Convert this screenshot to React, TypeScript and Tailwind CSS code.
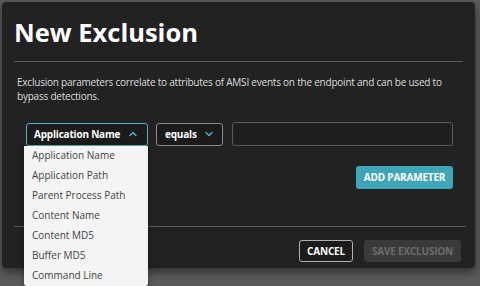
import { ChevronUp, ChevronDown } from 'lucide-react'

const options = [
  'Application Name',
  'Application Path',
  'Parent Process Path',
  'Content Name',
  'Content MD5',
  'Buffer MD5',
  'Command Line',
]

export default function App() {
  return (
    <div
      className="w-[480px] h-[286px] bg-[#5b5b5b] overflow-hidden pt-[2px] pl-[2px]"
      style={{ fontFamily: '"Open Sans", "Liberation Sans", sans-serif' }}
    >
      <div className="relative w-[473px] h-[266px] bg-[#222222] rounded-[4px] shadow-[0_4px_10px_rgba(0,0,0,0.5)] px-3">
        {/* Header */}
        <div className="pt-[14px] pb-[13px] border-b border-[#5a5a5a]">
          <h1 className="text-[25.5px] leading-[32px] font-bold text-white">New Exclusion</h1>
        </div>

        {/* Body */}
        <div className="px-[3px] pt-[13px]">
          <p className="text-[10px] leading-[14px] tracking-[-0.22px] text-[#dddddd]">
            Exclusion parameters correlate to attributes of AMSI events on the endpoint and can be used to
            bypass detections.
          </p>

          <div className="flex items-center gap-2 mt-[19px] pl-[9px]">
            <div className="relative">
              <button className="w-[122px] h-[23px] flex items-center justify-between pl-[7px] pr-[8px] bg-[#1b1b1b] border border-[#55b3c0] rounded-[3px] text-white text-[10px] tracking-[-0.2px] font-bold">
                <span>Application Name</span>
                <ChevronUp className="w-3 h-3 text-[#4eb0bf]" strokeWidth={3} />
              </button>
              <div className="absolute left-[-2px] top-[23px] w-[124px] bg-[#f4f4f4] rounded-b-[3px] z-10 shadow-[0_2px_6px_rgba(0,0,0,0.4)]">
                {options.map((o) => (
                  <div key={o} className="h-[20px] flex items-center px-[8px] text-[10px] text-[#444444]">
                    {o}
                  </div>
                ))}
              </div>
            </div>
            <button className="w-[67px] h-[23px] flex items-center justify-between pl-[8px] pr-[7px] bg-[#1b1b1b] border border-[#8a8a8a] rounded-[3px] text-white text-[10px] tracking-[-0.2px] font-bold">
              <span>equals</span>
              <ChevronDown className="w-3 h-3 text-[#4eb0bf]" strokeWidth={3} />
            </button>
            <input className="w-[221px] h-[24px] bg-[#1f1f1f] border border-[#5c5c5c] rounded-[3px] ml-[1px]" />
          </div>

          <div className="flex justify-end pr-[7px] mt-[20px]">
            <button className="w-[97px] h-[23px] bg-[#3ea6b7] rounded-[3px] text-white text-[10px] tracking-[-0.2px] font-bold">
              ADD PARAMETER
            </button>
          </div>
        </div>

        {/* Footer */}
        <div className="mt-[37px] border-t border-[#5a5a5a] flex justify-end gap-[11px] pt-[13px] pr-[5px] -mr-[3px]">
          <button className="w-[54px] h-[22px] bg-[#1b1b1b] border border-[#b0b0b0] rounded-[3px] text-white text-[10px] tracking-[-0.2px] font-bold">
            CANCEL
          </button>
          <button className="w-[97px] h-[22px] bg-[#3a3a3a] rounded-[3px] text-[#6d6d6d] text-[10px] tracking-[-0.2px] font-bold">
            SAVE EXCLUSION
          </button>
        </div>
      </div>
    </div>
  )
}
